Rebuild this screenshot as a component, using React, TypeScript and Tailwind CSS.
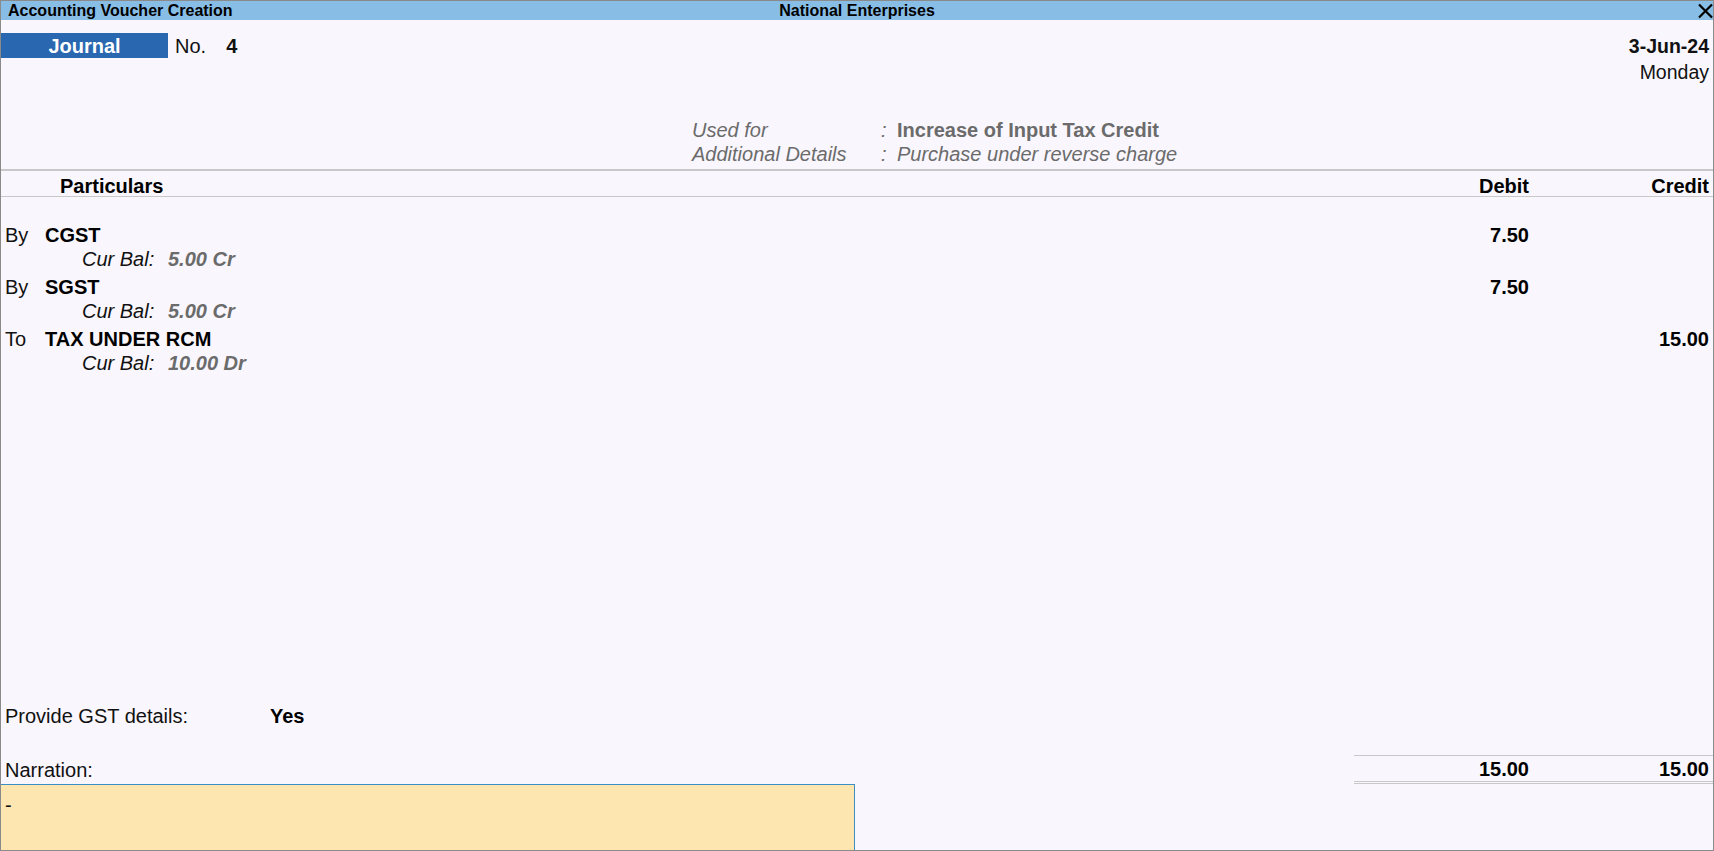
export default function App() {
  const entries = [
    { side: "By", ledger: "CGST", bal: "5.00 Cr", debit: "7.50", credit: "" },
    { side: "By", ledger: "SGST", bal: "5.00 Cr", debit: "7.50", credit: "" },
    { side: "To", ledger: "TAX UNDER RCM", bal: "10.00 Dr", debit: "", credit: "15.00" },
  ];

  return (
    <div className="w-[1714px] h-[851px] flex flex-col overflow-hidden bg-[#f9f7fd] border border-[#8a8a8a] font-['Liberation_Sans',Arial,sans-serif] text-[20px] text-[#111]">
      {/* title bar */}
      <div className="h-[19px] shrink-0 bg-[#88bde6] grid grid-cols-[1fr_auto_1fr] items-center text-[16px] font-bold leading-none text-black">
        <div className="pl-[7px]">Accounting Voucher Creation</div>
        <div>National Enterprises</div>
        <div className="flex justify-end items-start h-full">
          <svg width="16" height="16" viewBox="0 0 16 16" className="mt-[2px]">
            <path d="M2 1.5 L15 14.5 M15 1.5 L2 14.5" stroke="#000" strokeWidth="2.2" />
          </svg>
        </div>
      </div>

      {/* voucher header */}
      <div className="shrink-0 pt-[13px] flex justify-between items-start">
        <div className="flex items-center h-[25px]">
          <div className="w-[167px] h-[25px] bg-[#2a67b1] text-white font-bold flex items-center justify-center">
            Journal
          </div>
          <span className="ml-[7px]">No.</span>
          <span className="ml-[20px] font-bold">4</span>
        </div>
        <div className="flex flex-col items-end pr-[4px] leading-[26px] text-[19.5px]">
          <span className="font-bold">3-Jun-24</span>
          <span>Monday</span>
        </div>
      </div>

      <div className="shrink-0 mt-[33px] pl-[691px] grid grid-cols-[189px_16px_auto] leading-[24px] text-[20px] text-[#6b6b6b] italic">
        <span>Used for</span>
        <span>:</span>
        <span className="not-italic font-bold">Increase of Input Tax Credit</span>
        <span>Additional Details</span>
        <span>:</span>
        <span>Purchase under reverse charge</span>
      </div>

      <div className="shrink-0 mt-[3px] h-[2px] bg-[#c8c8c8]" />
      <div className="shrink-0 h-[25px] pb-[3px] grid grid-cols-[1fr_180px_180px] items-center pr-[4px] font-bold text-black">
        <span className="pl-[59px]">Particulars</span>
        <span className="text-right">Debit</span>
        <span className="text-right">Credit</span>
      </div>
      <div className="shrink-0 h-px bg-[#c8c8c8]" />

      {/* entries */}
      <div className="flex-1 pt-[23px]">
        {entries.map((e) => (
          <div key={e.ledger}>
            <div className="h-[26px] grid grid-cols-[1fr_180px_180px] items-center pr-[4px]">
              <div className="flex pl-[4px]">
                <span className="w-[40px]">{e.side}</span>
                <span className="font-bold text-black">{e.ledger}</span>
              </div>
              <span className="text-right font-bold text-black">{e.debit}</span>
              <span className="text-right font-bold text-black">{e.credit}</span>
            </div>
            <div className="h-[26px] flex items-center pl-[81px] italic">
              <span className="w-[86px]">Cur Bal:</span>
              <span className="font-bold text-[#6b6b6b]">{e.bal}</span>
            </div>
          </div>
        ))}
      </div>

      {/* footer */}
      <div className="shrink-0 h-[26px] flex items-center pl-[4px]">
        <span className="w-[265px]">Provide GST details:</span>
        <span className="font-bold text-black">Yes</span>
      </div>
      <div className="shrink-0 h-[26px]" />
      <div className="shrink-0 h-[29px] flex items-center">
        <span className="flex-1 pl-[4px]">Narration:</span>
        <div className="w-[359px] h-full flex items-center border-t border-[#c8c8c8] border-b-[3px] border-double font-bold text-black">
          <span className="w-[175px] text-right">15.00</span>
          <span className="flex-1 text-right pr-[4px]">15.00</span>
        </div>
      </div>
      <div className="shrink-0 h-[66px] w-[854px] bg-[#fee6b0] border-t border-r border-[#3b8fc4] pl-[4px] pt-[11px] leading-[19px]">
        -
      </div>
    </div>
  );
}
